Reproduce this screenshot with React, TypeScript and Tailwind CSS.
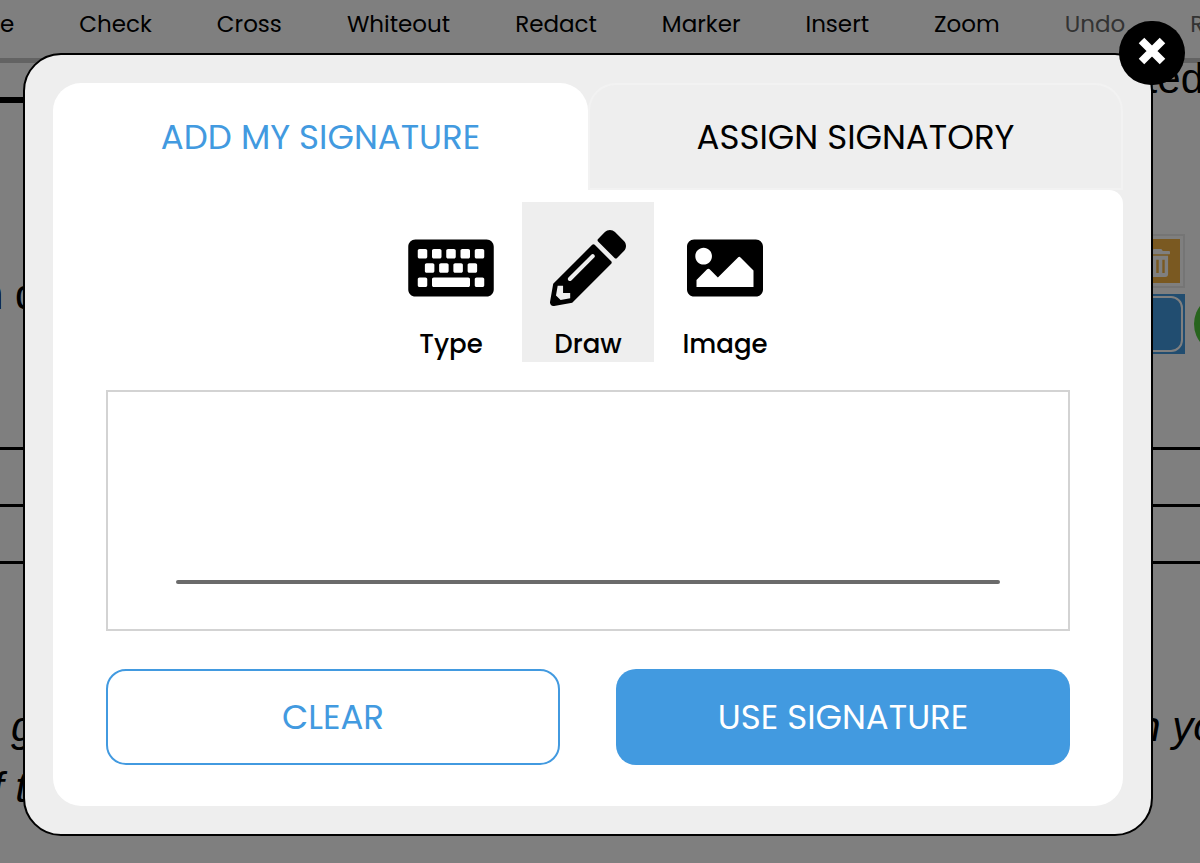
import { useState } from "react";
import type { ReactNode } from "react";
import { FaImage, FaKeyboard, FaPencilAlt } from "react-icons/fa";

const menuItems = [
  "Check",
  "Cross",
  "Whiteout",
  "Redact",
  "Marker",
  "Insert",
  "Zoom",
];

function TrashIcon() {
  return (
    <svg width="25" height="29" viewBox="0 0 26 30" fill="currentColor">
      <path d="M9 0h8l1.5 2H25a1 1 0 0 1 1 1v1.5a1 1 0 0 1-1 1H1a1 1 0 0 1-1-1V3a1 1 0 0 1 1-1h6.5z" />
      <path
        fillRule="evenodd"
        d="M2 7h22v19a3 3 0 0 1-3 3H5a3 3 0 0 1-3-3zM5.5 11v14H8V11zM11.7 11v14h2.6V11zM18 11v14h2.5V11z"
      />
    </svg>
  );
}

function CloseIcon() {
  return (
    <svg width="28" height="28" viewBox="0 0 28 28">
      <path
        d="M3.5 3.5l21 21M24.5 3.5l-21 21"
        stroke="currentColor"
        strokeWidth="7.8"
      />
    </svg>
  );
}

function Toolbar() {
  return (
    <nav className="flex h-[63px] gap-[65px] border-b-[5px] border-[#c6c6c6] bg-white pb-[10px] text-[23px]">
      <button>e</button>
      {menuItems.map((item) => (
        <button key={item}>{item}</button>
      ))}
      <button className="text-[#666]" disabled>
        Undo
      </button>
      <button className="text-[#666]" disabled>
        Redo
      </button>
    </nav>
  );
}

function DocumentPage() {
  return (
    <main className="font-['Liberation_Sans',sans-serif] text-[42px]">
      <div className="flex h-[74px] justify-between">
        <hr className="h-[6px] w-1/2 self-center border-0 bg-black" />
        <p className="-mr-1 leading-8">ted</p>
      </div>

      <div className="mt-[97px] flex h-[120px] items-center justify-between">
        <p className="-ml-5">n d</p>
        <div className="-mr-[54px] flex items-end gap-[9px]">
          <div className="flex w-24 flex-col gap-[6px]">
            <div className="flex h-[54px] border-2 border-[#eaeaea] p-[3px]">
              <button
                aria-label="Delete field"
                className="flex flex-1 items-center justify-end bg-[#f5b342] pt-1 pr-[10px] text-white"
              >
                <TrashIcon />
              </button>
            </div>
            <div className="flex h-[60px] bg-[#429ae0] p-[2px]">
              <button
                aria-label="Signature field"
                className="flex-1 rounded-xl border-2 border-white"
              />
            </div>
          </div>
          <div className="size-[60px] rounded-full bg-[#4fc93a]" />
        </div>
      </div>

      <div className="mt-[93px]">
        <div className="h-[57px] border-t-[3px] border-black" />
        <div className="h-[57px] border-t-[3px] border-black" />
        <div className="h-[57px] border-t-[3px] border-black" />
      </div>

      <div className="mt-[78px] leading-[61px] italic">
        <p className="flex justify-between">
          <span className="ml-[11px]">g</span>
          <span className="-mr-10">n you</span>
        </p>
        <p className="-ml-[8px]">f t</p>
      </div>
    </main>
  );
}

interface TabProps {
  label: string;
  active: boolean;
  onClick: () => void;
}

function Tab({ label, active, onClick }: TabProps) {
  return (
    <button
      role="tab"
      aria-selected={active}
      onClick={onClick}
      className={
        active
          ? "h-[107px] rounded-t-[28px] bg-white pt-0.5 text-[#429ae0]"
          : "h-[107px] rounded-t-[28px] border-2 border-[#f2f2f2] bg-[#eee] pt-0.5 text-black"
      }
    >
      {label}
    </button>
  );
}

interface ModeButtonProps {
  label: string;
  icon: ReactNode;
  active: boolean;
  onClick: () => void;
}

function ModeButton({ label, icon, active, onClick }: ModeButtonProps) {
  return (
    <button
      aria-pressed={active}
      onClick={onClick}
      className={
        active
          ? "flex h-40 w-[132px] flex-col items-center bg-[#eee] pt-7"
          : "flex h-40 w-[132px] flex-col items-center pt-7"
      }
    >
      {icon}
      <span className="mt-5 text-[26px] leading-9 font-medium">{label}</span>
    </button>
  );
}

function SignatureDialog() {
  const [tab, setTab] = useState("add");
  const [mode, setMode] = useState("draw");

  return (
    <div
      role="dialog"
      aria-label="Signature"
      className="relative rounded-[38px] border-2 border-black bg-[#eee] p-7"
    >
      <button
        aria-label="Close"
        className="absolute -top-[34px] -right-[34px] flex h-16 w-[66px] items-center justify-center rounded-full bg-black pb-1 text-white"
      >
        <CloseIcon />
      </button>

      <div role="tablist" className="grid grid-cols-2 text-[34px]">
        <Tab
          label="ADD MY SIGNATURE"
          active={tab === "add"}
          onClick={() => setTab("add")}
        />
        <Tab
          label="ASSIGN SIGNATORY"
          active={tab === "assign"}
          onClick={() => setTab("assign")}
        />
      </div>

      <div className="rounded-tr-[14px] rounded-b-[28px] bg-white px-[53px] pt-3 pb-[41px]">
        <div className="flex justify-center gap-[5px]">
          <ModeButton
            label="Type"
            icon={<FaKeyboard className="h-[76px] w-[86px]" />}
            active={mode === "type"}
            onClick={() => setMode("type")}
          />
          <ModeButton
            label="Draw"
            icon={<FaPencilAlt className="size-[76px]" />}
            active={mode === "draw"}
            onClick={() => setMode("draw")}
          />
          <ModeButton
            label="Image"
            icon={<FaImage className="size-[76px]" />}
            active={mode === "image"}
            onClick={() => setMode("image")}
          />
        </div>

        <div className="mt-7 flex h-[241px] items-end border-2 border-[#d3d3d3] px-[68px] pb-[45px]">
          <div className="h-1 flex-1 rounded-full bg-[#6b6b6b]" />
        </div>

        <div className="mt-[38px] grid grid-cols-2 gap-14 text-[34px]">
          <button className="h-24 rounded-[20px] border-2 border-[#429ae0] bg-white text-[#429ae0]">
            CLEAR
          </button>
          <button className="h-24 rounded-[20px] bg-[#429ae0] text-white">
            USE SIGNATURE
          </button>
        </div>
      </div>
    </div>
  );
}

export default function App() {
  return (
    <div className="relative min-h-screen overflow-hidden bg-white font-['Poppins','Inter',sans-serif] text-black">
      <Toolbar />
      <DocumentPage />
      <div className="absolute inset-0 bg-black/50 pt-[53px] pr-[47px] pl-[23px]">
        <SignatureDialog />
      </div>
    </div>
  );
}
